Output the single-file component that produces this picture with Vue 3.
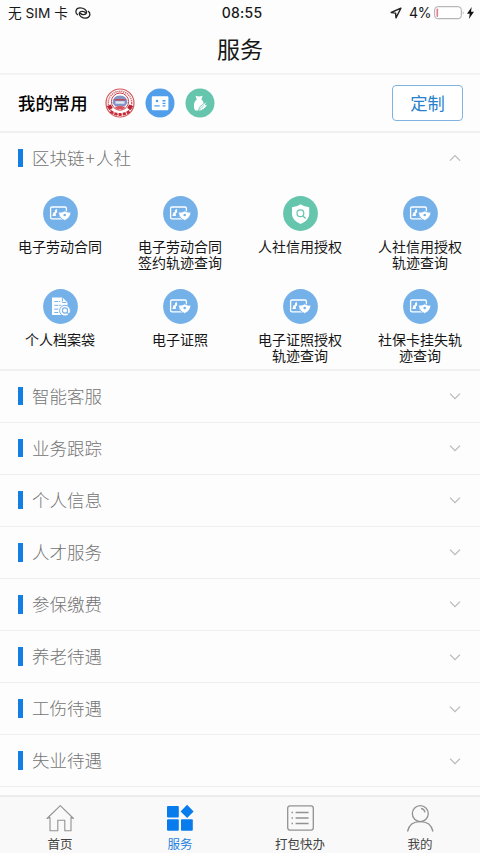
<script setup>
const services = [
  { lines: ['电子劳动合同'], icon: 'card' },
  { lines: ['电子劳动合同', '签约轨迹查询'], icon: 'card' },
  { lines: ['人社信用授权'], icon: 'shield' },
  { lines: ['人社信用授权', '轨迹查询'], icon: 'card' },
  { lines: ['个人档案袋'], icon: 'file' },
  { lines: ['电子证照'], icon: 'card' },
  { lines: ['电子证照授权', '轨迹查询'], icon: 'card' },
  { lines: ['社保卡挂失轨', '迹查询'], icon: 'card' },
]
const groups = ['智能客服', '业务跟踪', '个人信息', '人才服务', '参保缴费', '养老待遇', '工伤待遇', '失业待遇']
const tabs = [
  { name: '首页', icon: 'home' },
  { name: '服务', icon: 'grid' },
  { name: '打包快办', icon: 'list' },
  { name: '我的', icon: 'user' },
]
</script>

<template>
  <div class="screen">
    <header class="status">
      <div class="side">
        <span class="carrier">无 SIM 卡</span>
        <svg class="link" width="16" height="12" viewBox="0 0 16 12" fill="none" stroke="#222" stroke-width="1.25" stroke-linecap="round">
          <path d="M2.6 7.7C-.2 5.6.5 1 5 .9c3.600-.1 6.900 2.300 6.500 4.800-.4 2.500-5.200 2.400-6.200.4" />
          <path d="M13.200 4.300c2.800 2.100 2.100 6.700-2.400 6.800-3.600.1-6.900-2.300-6.500-4.800.4-2.500 5.200-2.400 6.200-.4" />
        </svg>
      </div>
      <span class="clock">08:55</span>
      <div class="side right">
        <svg class="loc" width="12" height="12" viewBox="0 0 12 12" fill="none" stroke="#222" stroke-width="1.4" stroke-linejoin="round">
          <path d="M10.900 1.200 1.200 5.500l4.400.6.400 4.800z" />
        </svg>
        <span class="pct">4%</span>
        <svg class="battery" width="31" height="14" viewBox="0 0 31 14">
          <rect x=".7" y=".7" width="26.6" height="12" rx="3" fill="#fff" stroke="#a9a5a5" />
          <rect x="2.5" y="2.500" width="1.600" height="8.400" rx=".7" fill="#e27b8b" />
          <path d="M28.800 4.700q1.700 2 0 4z" fill="#aaa" />
        </svg>
        <svg class="bolt" width="7" height="12" viewBox="0 0 7 12"><path d="M4.700 0 0 6.700h2.800L1.900 12 7 4.800H4z" fill="#111" /></svg>
      </div>
    </header>
    <h1 class="title">服务</h1>

    <section class="favorites">
      <span class="fav-label">我的常用</span>
      <svg class="fav" viewBox="0 0 30 30">
        <circle cx="15" cy="15" r="14" fill="#fff" stroke="#d4555b" stroke-width="1.2" />
        <circle cx="15" cy="15" r="11.7" fill="none" stroke="#d4666b" stroke-width="1.5" stroke-dasharray="1.3 .7" />
        <circle cx="15" cy="13.6" r="8.6" fill="#fff" stroke="#cb3f49" stroke-width="1" />
        <path d="M7.600 15q0-7.500 7.400-7.500t7.400 7.500l-2.600 3.400h-9.600z" fill="#8694c4" />
        <path d="M9.500 11h11v1.600h-11z" fill="#b64e64" />
        <path d="M10.500 13.200h9v2.600h-9z" fill="#d9e7f2" />
        <path d="M10 19.300q5-2.400 10 0l-2 1.900h-6z" fill="#dc535b" />
        <path d="m1.800 18.300 4-1.900 2 3.700-3.500 2zM28.200 18.300l-4-1.900-2 3.700 3.500 2z" fill="#b72634" />
        <path d="M5.500 23.500q9.500 6 19 0" fill="none" stroke="#c62c38" stroke-width="2.800" stroke-dasharray="3 1.300" />
      </svg>
      <svg class="fav" viewBox="0 0 30 30">
        <circle cx="15" cy="15" r="14.5" fill="#519eea" />
        <rect x="6.800" y="8.300" width="16.600" height="14" rx="1.200" fill="#fff" />
        <circle cx="12" cy="13" r="1.300" fill="#519eea" />
        <path d="M9.300 17.300h5.400v1.300H9.300zM17.500 12.100h3v1.300h-3zm0 2.600h3V16h-3zm0 2.600h3v1.300h-3z" fill="#519eea" />
      </svg>
      <svg class="fav" viewBox="0 0 30 30">
        <circle cx="15" cy="15" r="14.5" fill="#65c5ad" />
        <path d="M10.500 7.800q3.600 1.200 7.200 0l-1.400 3.600q2.800 1.800 2.200 5l-4.700 6.200h-3.600q-1.800-2.200-1.200-6.600.4-3 2.800-4.600z" fill="#fff" />
        <path d="m13 23.500 2-4.900 7-5.300-1.700 3.600 2.400-.6q-2.700 5.900-9.700 7.200z" fill="#fff" stroke="#65c5ad" stroke-width=".8" />
        <path d="m13.200 23.200 5.600-5.800" stroke="#65c5ad" stroke-width=".7" />
      </svg>
      <button class="customize">定制</button>
    </section>

    <section class="expanded">
      <div class="group-head">
        <i class="bar"></i><span>区块链<span class="plus">+</span>人社</span>
        <svg class="chevron" viewBox="0 0 12 8"><path d="m1 6.600 5-5 5 5" /></svg>
      </div>
      <div class="services">
        <div v-for="(item, i) in services" :key="i" class="service">
          <svg class="circle" viewBox="0 0 35 35">
            <circle cx="17.5" cy="17.5" r="17.400" :fill="item.icon === 'shield' ? '#65c5ad' : '#75b1e9'" />
            <g v-if="item.icon === 'card'">
              <rect x="7.600" y="11" width="15.800" height="11.800" rx="1.400" fill="none" stroke="#fff" stroke-width="1.300" />
              <path d="m9.300 20 1.200-3.600 1.600-.6-.2-1.900 2.100-.9.200 3.200-1.500 1.300.2 2.500z" fill="#fff" />
              <path d="M15.900 20.200h1" stroke="#fff" stroke-width="1" />
              <path d="M15.400 16.100q3.700.6 6.300-1.200 2.600 1.800 6.300 1.200-.5 6-6.300 8.400-5.800-2.400-6.300-8.400z" fill="#fff" stroke="#75b1e9" stroke-width=".8" />
              <circle cx="21.700" cy="19" r="1.300" fill="#75b1e9" />
            </g>
            <g v-else-if="item.icon === 'shield'">
              <path d="M17.600 8.200q3.800 2.800 8.600 3v7.200q-.4 6-8.600 9.500-8.200-3.500-8.600-9.500v-7.200q4.800-.2 8.600-3z" fill="#fff" />
              <circle cx="17.400" cy="17.300" r="3.400" fill="none" stroke="#65c5ad" stroke-width="1.200" />
              <path d="m20 20 2.600 2.500" stroke="#65c5ad" stroke-width="1.200" />
            </g>
            <g v-else>
              <path d="M9 8.500h10.500l5 5V26H9z" fill="#fff" />
              <path d="M19.400 8.500v5h5M11.300 12.500h6m-6 3.800h7m-7 3.800h4m-4 3.400h4" fill="none" stroke="#75b1e9" stroke-width="1" stroke-dasharray="4 .8" />
              <circle cx="22" cy="21.700" r="5.400" fill="#fff" stroke="#75b1e9" stroke-width="1" />
              <circle cx="22" cy="21.500" r="2.600" fill="#fff" stroke="#75b1e9" stroke-width="1.100" />
              <path d="m24 23.500 3 3" stroke="#75b1e9" stroke-width="1.100" />
            </g>
          </svg>
          <div class="name"><template v-for="(line, n) in item.lines" :key="line"><br v-if="n">{{ line }}</template></div>
        </div>
      </div>
    </section>

    <main class="groups">
      <div v-for="group in groups" :key="group" class="group-head row">
        <i class="bar"></i><span>{{ group }}</span>
        <svg class="chevron" viewBox="0 0 12 8"><path d="m1 1.600 5 5 5-5" /></svg>
      </div>
    </main>

    <nav class="tabs">
      <div v-for="tab in tabs" :key="tab.name" class="tab" :class="{ active: tab.icon === 'grid' }">
        <svg class="tab-icon" viewBox="0 0 28 28" fill="none" stroke="#929292" stroke-width="1.1">
          <path v-if="tab.icon === 'home'" d="M1 14.500 14.300 1.700l13.200 12.800-2.500-1v13.200h-6.200V16.200h-7v10.500H4V13.500z" stroke-linejoin="round" />
          <g v-else-if="tab.icon === 'grid'" fill="#087ced" stroke="none">
            <rect x="1" y="2" width="11.800" height="11.500" rx="1" /><rect x="1" y="15.200" width="11.800" height="11.500" rx="1" />
            <rect x="15" y="15.200" width="11.800" height="11.500" rx="1" /><path d="m21.100.7 6.500 6.700-6.500 6.700-6.500-6.700z" />
          </g>
          <g v-else-if="tab.icon === 'list'">
            <rect x="1.700" y="1.800" width="25.600" height="24.300" rx="2.300" stroke-width="1.300" />
            <path d="M9.600 8.500h13M9.600 14h13M9.600 19.500h13M5.500 8.500H7M5.500 14H7m-1.500 5.500H7" stroke-width="1.300" />
          </g>
          <g v-else>
            <circle cx="14.300" cy="9.600" r="8" stroke-width="1.300" /><path d="M15 4.400q3.400.7 4 4M1.500 27.500Q3.500 17.700 14.200 17.700T27 27.500" stroke-width="1.300" />
          </g>
        </svg>
        <span>{{ tab.name }}</span>
      </div>
    </nav>
  </div>
</template>

<style>
body { margin: 0; }
</style>

<style scoped>
* { box-sizing: border-box; }
.screen { width: 480px; height: 853px; overflow: hidden; display: flex; flex-direction: column; background: #fdfdfd; color: #171717; font-family: Inter, "Noto Sans CJK SC", sans-serif; }
.status { height: 25px; display: grid; grid-template-columns: 1fr auto 1fr; align-items: center; padding: 0 6px 0 8px; font-size: 14px; line-height: 24px; flex: none; }
.side { display: flex; align-items: center; }
.right { justify-content: flex-end; }
.carrier { font-size: 13.7px; }
.link { margin-left: 7px; }
.clock { font-weight: 500; font-size: 14px; letter-spacing: .25px; padding-left: 2px; }
.loc { margin-right: 7px; }
.pct { font-size: 14px; margin-right: 3px; letter-spacing: -.4px; }
.bolt { margin-left: 2px; }
.title { height: 50px; margin: 0; padding-top: 1px; border-bottom: 2px solid #f3f3f3; font-size: 23px; font-weight: 400; line-height: 48px; text-align: center; flex: none; }
.favorites { height: 58px; display: flex; align-items: center; padding: 0 17px 0 18px; border-bottom: 2px solid #f0f0f0; flex: none; }
.fav-label { width: 86.5px; margin-top: -1px; font-size: 17.4px; font-weight: 500; color: #000; }
.fav { width: 30px; height: 30px; margin-right: 10.3px; }
.customize { width: 71px; height: 36px; margin-left: auto; padding: 0 0 1px; border: 1px solid #80b3df; border-radius: 4px; background: #fff; color: #2781cb; font: 17.3px/33px "Noto Sans CJK SC", sans-serif; }
.expanded { height: 238px; border-bottom: 2px solid #f0f0f0; flex: none; }
.group-head { height: 50px; display: flex; align-items: center; padding: 0 19px 0 18px; color: #747474; font-family: "Noto Sans CJK SC", sans-serif; font-size: 17.5px; font-weight: 300; }
.group-head > span { padding-bottom: 2px; }
.plus { display: inline-block; width: 11.5px; text-align: center; }
.bar { width: 4.5px; height: 18.5px; margin-right: 9.5px; background: #147ee5; }
.chevron { width: 12px; height: 8px; margin-left: auto; fill: none; stroke: #bababa; stroke-width: 1.3; }
.services { display: grid; grid-template-columns: repeat(4, 120px); grid-auto-rows: 93px; padding-top: 13px; }
.service { display: flex; flex-direction: column; align-items: center; }
.circle { width: 35px; height: 35px; }
.name { margin-top: 6.5px; font: 14px/16.8px "Noto Sans CJK SC", sans-serif; text-align: center; white-space: nowrap; color: #151515; }
.groups { flex: 1; margin-top: -.5px; }
.row { height: 52.1px; border-bottom: 1.5px solid #f0f0f0; }
.tabs { height: 58px; display: grid; grid-template-columns: repeat(4, 1fr); background: #f9f9f9; border-top: 2px solid #ececec; flex: none; }
.tab { display: flex; flex-direction: column; align-items: center; padding-top: 7px; color: #444; font: 12.5px/18px "Noto Sans CJK SC", sans-serif; }
.tab-icon { width: 28px; height: 28px; margin-bottom: 3px; }
.active { color: #2582dc; }
</style>
